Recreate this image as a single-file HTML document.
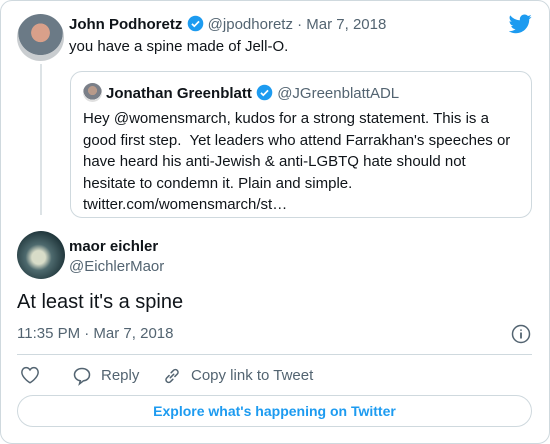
<!DOCTYPE html><html><head><style>
body{margin:0;width:550px;height:444px;font-family:"Liberation Sans",sans-serif;background:#fff;overflow:hidden}
.card{position:absolute;left:0;top:0;width:548px;height:442px;border:1px solid #cfd9de;border-radius:12px}
.a{position:absolute}
.g{color:#536471}
</style></head><body>
<div class="card"></div>
<div class="a" style="left:17px;top:14px;width:47px;height:47px;border-radius:50%;background:radial-gradient(circle at 50% 40%,#d9a08a 0 25%,#6b7a86 26% 60%,#c9cdd0 61%)"></div>
<div class="a" style="left:40px;top:64px;width:2px;height:151px;background:#dde3e6"></div>
<div class="a" style="left:69px;top:15px;font-size:15px;white-space:nowrap"><b style="color:#0f1419">John Podhoretz</b> <svg width="17" height="17" viewBox="0 0 24 24" style="vertical-align:-3px"><circle cx="12" cy="12" r="11" fill="#1d9bf0"/><path d="M7 12.5l3.3 3.3L17 9" stroke="#fff" stroke-width="2.4" fill="none"/></svg> <span class="g">@jpodhoretz · Mar 7, 2018</span></div>
<div class="a" style="left:69px;top:38px;font-size:15px;color:#0f1419">you have a spine made of Jell-O.</div>
<svg class="a" style="left:509px;top:14px" width="23" height="20" viewBox="0 0 24 20"><path fill="#1d9bf0" d="M23.6 2.4c-.9.4-1.8.6-2.8.8 1-.6 1.8-1.6 2.1-2.7-1 .6-2 1-3.1 1.2C18.9.7 17.6.1 16.200.1c-2.7 0-4.9 2.2-4.9 4.9 0 .4 0 .8.1 1.1C7.3 5.9 3.7 4 1.3 1 .9 1.7.6 2.6.6 3.5c0 1.7.9 3.2 2.2 4.1-.8 0-1.6-.2-2.2-.6v.1c0 2.4 1.7 4.4 3.9 4.8-.4.1-.8.2-1.3.2-.3 0-.6 0-.9-.1.6 2 2.4 3.4 4.6 3.4-1.7 1.300-3.8 2.1-6.1 2.1-.4 0-.8 0-1.2-.1 2.2 1.4 4.8 2.2 7.5 2.2 9.1 0 14-7.5 14-14v-.6c1-.7 1.8-1.6 2.5-2.6z"/></svg>
<div class="a" style="left:70px;top:71px;width:460px;height:145px;border:1px solid #cfd9de;border-radius:12px"></div>
<div class="a" style="left:83px;top:83px;width:19px;height:19px;border-radius:50%;background:radial-gradient(circle at 50% 40%,#b89a8a 0 30%,#7a7f88 31% 60%,#e0e0e0 61%)"></div>
<div class="a" style="left:106px;top:84px;font-size:15px;white-space:nowrap"><b style="color:#0f1419">Jonathan Greenblatt</b> <svg width="17" height="17" viewBox="0 0 24 24" style="vertical-align:-3px"><circle cx="12" cy="12" r="11" fill="#1d9bf0"/><path d="M7 12.5l3.3 3.3L17 9" stroke="#fff" stroke-width="2.4" fill="none"/></svg> <span class="g">@JGreenblattADL</span></div>
<div class="a" style="left:83px;top:108px;width:428px;font-size:15px;line-height:21.5px;color:#0f1419">Hey @womensmarch, kudos for a strong statement. This is a good first step.&nbsp; Yet leaders who attend Farrakhan's speeches or have heard his anti-Jewish &amp; anti-LGBTQ hate should not hesitate to condemn it. Plain and simple.<br>twitter.com/womensmarch/st…</div>
<div class="a" style="left:17px;top:231px;width:48px;height:48px;border-radius:50%;background:radial-gradient(circle at 45% 55%,#d8dcc8 0 18%,#4e6a6e 35%,#22383d 70%)"></div>
<div class="a" style="left:69px;top:238px;font-size:15px;font-weight:bold;color:#0f1419">maor eichler</div>
<div class="a g" style="left:69px;top:258px;font-size:15px">@EichlerMaor</div>
<div class="a" style="left:17px;top:291px;font-size:20px;color:#0f1419">At least it's a spine</div>
<div class="a g" style="left:17px;top:325px;font-size:15px">11:35 PM · Mar 7, 2018</div>
<svg class="a" style="left:511px;top:324px" width="20" height="20" viewBox="0 0 20 20"><circle cx="10" cy="10" r="8.5" fill="none" stroke="#536471" stroke-width="1.5"/><path d="M10 8.5v6M10 5.5v1.2" stroke="#536471" stroke-width="1.8"/></svg>
<div class="a" style="left:17px;top:354px;width:515px;height:1px;background:#cfd9de"></div>
<svg class="a" style="left:20px;top:366px" width="20" height="18" viewBox="0 0 24 22"><path d="M12 20.5S2 14.5 2 7.5C2 4.5 4.3 2 7.2 2c2 0 3.7 1.1 4.8 2.8C13.1 3.1 14.8 2 16.8 2 19.7 2 22 4.5 22 7.5c0 7-10 13-10 13z" fill="none" stroke="#536471" stroke-width="1.8"/></svg>
<svg class="a" style="left:72px;top:366px" width="20" height="20" viewBox="0 0 24 24"><path d="M12 3C6.5 3 3 6.5 3 10.5c0 3.7 3 6.6 7 7.2L9 21.5l4.5-3.6c4.4-.4 7.5-3.4 7.5-7.4C21 6.5 17.5 3 12 3z" fill="none" stroke="#536471" stroke-width="1.8"/></svg>
<div class="a g" style="left:101px;top:367px;font-size:15px">Reply</div>
<svg class="a" style="left:162px;top:366px" width="20" height="20" viewBox="0 0 24 24"><path d="M10 14l4-4M8.5 11.5l-3 3a3.2 3.2 0 004.5 4.5l3-3M15.5 12.5l3-3A3.2 3.2 0 0014 5l-3 3" fill="none" stroke="#536471" stroke-width="1.8" stroke-linecap="round"/></svg>
<div class="a g" style="left:191px;top:367px;font-size:15px">Copy link to Tweet</div>
<div class="a" style="left:17px;top:395px;width:513px;height:30px;border:1px solid #cfd9de;border-radius:16px;text-align:center;line-height:30px;font-size:14px;font-weight:bold;color:#1d9bf0">Explore what's happening on Twitter</div>
</body></html>
